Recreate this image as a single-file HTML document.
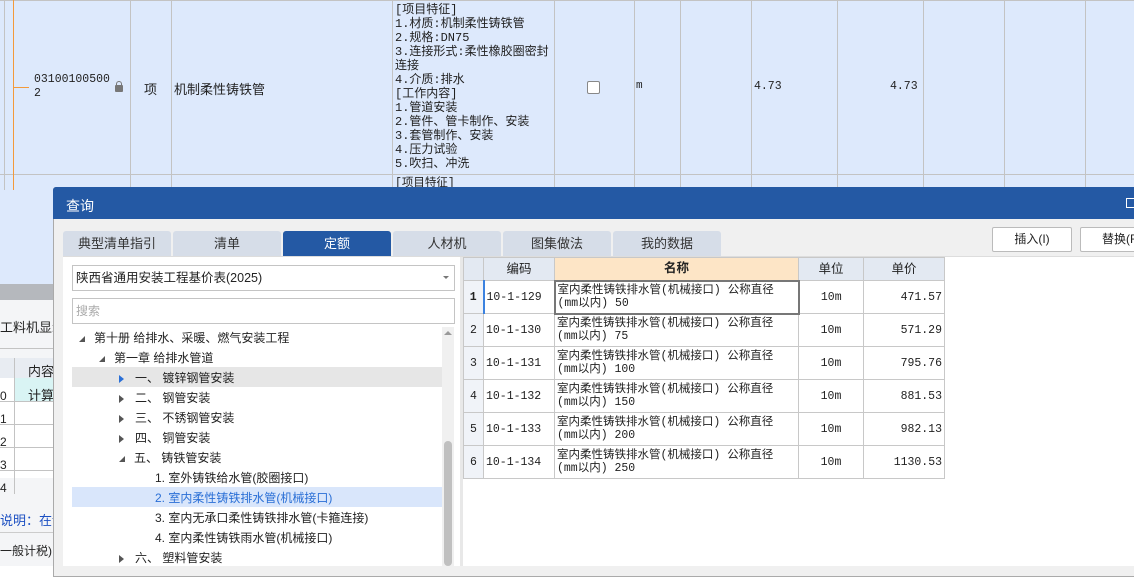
<!DOCTYPE html>
<html><head><meta charset="utf-8"><style>
*{margin:0;padding:0;box-sizing:border-box}
body{width:1134px;height:566px;overflow:hidden;position:relative;background:#fff;font-family:"Liberation Sans","Noto Sans CJK SC",sans-serif;font-size:12px;color:#222}
.a{position:absolute}
.vl{position:absolute;width:1px;background:#c3c3c3}
.hl{position:absolute;height:1px;background:#c3c3c3}
.mono{font-family:"Liberation Mono","Noto Sans CJK SC",monospace;font-size:11.5px;line-height:14px}
.tab{position:absolute;top:231px;height:25px;background:#d6dde8;border-radius:3px 3px 0 0;text-align:center;line-height:25px;font-size:13px;color:#333}
.tr{position:absolute;left:72px;width:370px;height:20px;line-height:20px;font-size:12px;color:#222}
.tri{display:inline-block;width:0;height:0;border-top:4px solid transparent;border-bottom:4px solid transparent;border-left:5px solid #555;vertical-align:middle}
.trd{display:inline-block;width:0;height:0;border-left:6px solid transparent;border-bottom:6px solid #555;vertical-align:middle}
td{border:1px solid #c8c8c8;font-family:"Liberation Mono","Noto Sans CJK SC",monospace;font-size:11.5px;padding:0 2px;height:33px;line-height:13px;white-space:nowrap}
tr.h td{height:23px;font-family:"Liberation Sans","Noto Sans CJK SC",sans-serif;font-size:12.5px;text-align:center}
</style></head><body>
<div class="a" style="left:0;top:0;width:1134px;height:190px;background:#dde9fc"></div>
<div class="hl" style="left:0;top:0;width:1134px"></div>
<div class="hl" style="left:0;top:174px;width:1134px"></div>
<div class="vl" style="left:4px;top:0;height:190px"></div>
<div class="vl" style="left:130px;top:0;height:190px"></div>
<div class="vl" style="left:171px;top:0;height:190px"></div>
<div class="vl" style="left:392px;top:0;height:190px"></div>
<div class="vl" style="left:554px;top:0;height:190px"></div>
<div class="vl" style="left:634px;top:0;height:190px"></div>
<div class="vl" style="left:680px;top:0;height:190px"></div>
<div class="vl" style="left:751px;top:0;height:190px"></div>
<div class="vl" style="left:837px;top:0;height:190px"></div>
<div class="vl" style="left:923px;top:0;height:190px"></div>
<div class="vl" style="left:1004px;top:0;height:190px"></div>
<div class="vl" style="left:1085px;top:0;height:190px"></div>
<div class="a" style="left:13px;top:0;width:1px;height:260px;background:#f39a3b"></div>
<div class="a" style="left:13px;top:87px;width:16px;height:1px;background:#f39a3b"></div>
<div class="a" style="left:13px;top:260px;width:16px;height:1px;background:#f39a3b"></div>
<div class="a mono" style="left:34px;top:73px">03100100500<br>2</div>
<div class="a" style="left:115px;top:85px;width:8px;height:7px;background:#777;border-radius:1px"></div>
<div class="a" style="left:116px;top:81px;width:6px;height:6px;border:1.5px solid #777;border-bottom:none;border-radius:3px 3px 0 0"></div>
<div class="a" style="left:144px;top:79px;font-size:13px">项</div>
<div class="a" style="left:174px;top:79px;font-size:13px">机制柔性铸铁管</div>
<div class="a mono" style="left:395px;top:3px;width:158px;font-size:12px">[项目特征]<br>1.材质:机制柔性铸铁管<br>2.规格:DN75<br>3.连接形式:柔性橡胶圈密封连接<br>4.介质:排水<br>[工作内容]<br>1.管道安装<br>2.管件、管卡制作、安装<br>3.套管制作、安装<br>4.压力试验<br>5.吹扫、冲洗</div>
<div class="a mono" style="left:395px;top:177px">[项目特征]</div>
<div class="a" style="left:587px;top:81px;width:13px;height:13px;border:1px solid #888;border-radius:2px;background:#fff"></div>
<div class="a" style="left:636px;top:80px;font-size:11px;font-family:'Liberation Mono',monospace">m</div>
<div class="a mono" style="left:754px;top:80px">4.73</div>
<div class="a mono" style="left:890px;top:80px">4.73</div>
<div class="a mono" style="left:34px;top:248px">031<br>3</div>
<div class="a" style="left:0;top:190px;width:53px;height:96px;background:#dde9fc"></div>
<div class="a" style="left:0;top:284px;width:53px;height:16px;background:#b5b8bd"></div>
<div class="a" style="left:0;top:300px;width:53px;height:266px;background:#f4f5f7"></div>
<div class="a" style="left:0;top:317px;font-size:13px">工料机显示</div>
<div class="hl" style="left:0;top:348px;width:53px"></div>
<div class="a" style="left:0;top:358px;width:53px;height:20px;background:#e8ecf2"></div>
<div class="a" style="left:28px;top:361px;font-size:13px">内容</div>
<div class="a" style="left:14px;top:378px;width:39px;height:24px;background:#d9f4f4"></div>
<div class="a" style="left:0;top:378px;width:14px;height:100px;background:#fff"></div>
<div class="a" style="left:14px;top:402px;width:39px;height:76px;background:#fff"></div>
<div class="a" style="left:28px;top:385px;font-size:13px">计算</div>
<div class="a" style="left:0;top:385px;font-size:12px;line-height:23px">0<br>1<br>2<br>3<br>4</div>
<div class="vl" style="left:14px;top:358px;height:136px"></div>
<div class="hl" style="left:0;top:401px;width:53px"></div><div class="hl" style="left:0;top:424px;width:53px"></div><div class="hl" style="left:0;top:447px;width:53px"></div><div class="hl" style="left:0;top:470px;width:53px"></div>
<div class="a" style="left:0;top:510px;font-size:13px;color:#1b4fc2">说明：在计</div>
<div class="a" style="left:0;top:532px;width:53px;height:1px;background:#ccc"></div>
<div class="a" style="left:0;top:542px;font-size:12px">一般计税)</div>
<div class="a" style="left:53px;top:187px;width:1090px;height:390px;background:#f0f0f0;border:1px solid #aaa;border-radius:3px 3px 0 0"></div>
<div class="a" style="left:53px;top:187px;width:1090px;height:32px;background:#2459a4;border-radius:3px 3px 0 0"></div>
<div class="a" style="left:66px;top:196px;color:#fff;font-size:14px">查询</div>
<div class="a" style="left:1126px;top:198px;width:10px;height:10px;border:1px solid #fff"></div>
<div class="tab" style="left:63px;width:108px">典型清单指引</div>
<div class="tab" style="left:173px;width:108px">清单</div>
<div class="tab" style="left:283px;width:108px;background:#2459a4;color:#fff">定额</div>
<div class="tab" style="left:393px;width:108px">人材机</div>
<div class="tab" style="left:503px;width:108px">图集做法</div>
<div class="tab" style="left:613px;width:108px">我的数据</div>
<div class="a" style="left:992px;top:227px;width:80px;height:25px;background:#fff;border:1px solid #bbb;border-radius:2px;text-align:center;line-height:23px;font-size:12px">插入(I)</div>
<div class="a" style="left:1080px;top:227px;width:80px;height:25px;background:#fff;border:1px solid #bbb;border-radius:2px;line-height:23px;font-size:12px;padding-left:21px">替换(R)</div>
<div class="a" style="left:63px;top:256px;width:1080px;height:1px;background:#ddd"></div>
<div class="a" style="left:63px;top:257px;width:397px;height:309px;background:#fff"></div>
<div class="a" style="left:72px;top:265px;width:383px;height:26px;border:1px solid #c4c4c4;line-height:24px;padding-left:3px;font-size:12.5px">陕西省通用安装工程基价表(2025)</div>
<div class="a" style="left:443px;top:276px;border-left:3px solid transparent;border-right:3px solid transparent;border-top:3px solid #777"></div>
<div class="a" style="left:72px;top:298px;width:383px;height:26px;border:1px solid #c4c4c4;line-height:24px;padding-left:3px;color:#aaa">搜索</div>
<div class="a" style="left:72px;top:367px;width:370px;height:20px;background:#e6e6e6"></div>
<div class="a" style="left:72px;top:487px;width:370px;height:20px;background:#d9e6fb"></div>
<div class="tr" style="top:328px"><span class="trd" style="margin-left:7px"></span><span style="margin-left:9px">第十册 给排水、采暖、燃气安装工程</span></div>
<div class="tr" style="top:348px"><span class="trd" style="margin-left:27px"></span><span style="margin-left:9px">第一章 给排水管道</span></div>
<div class="tr" style="top:368px"><span class="tri" style="margin-left:47px;border-left-color:#2a6fd6"></span><span style="margin-left:11px">一、 镀锌钢管安装</span></div>
<div class="tr" style="top:388px"><span class="tri" style="margin-left:47px"></span><span style="margin-left:11px">二、 钢管安装</span></div>
<div class="tr" style="top:408px"><span class="tri" style="margin-left:47px"></span><span style="margin-left:11px">三、 不锈钢管安装</span></div>
<div class="tr" style="top:428px"><span class="tri" style="margin-left:47px"></span><span style="margin-left:11px">四、 铜管安装</span></div>
<div class="tr" style="top:448px"><span class="trd" style="margin-left:47px"></span><span style="margin-left:9px">五、 铸铁管安装</span></div>
<div class="tr" style="top:468px;padding-left:83px">1. 室外铸铁给水管(胶圈接口)</div>
<div class="tr" style="top:488px;padding-left:83px;color:#2a6fd6">2. 室内柔性铸铁排水管(机械接口)</div>
<div class="tr" style="top:508px;padding-left:83px">3. 室内无承口柔性铸铁排水管(卡箍连接)</div>
<div class="tr" style="top:528px;padding-left:83px">4. 室内柔性铸铁雨水管(机械接口)</div>
<div class="tr" style="top:548px"><span class="tri" style="margin-left:47px"></span><span style="margin-left:11px">六、 塑料管安装</span></div>
<div class="a" style="left:442px;top:327px;width:12px;height:239px;background:#f0f0f0"></div>
<div class="a" style="left:444px;top:441px;width:8px;height:125px;background:#c0c0c0;border-radius:4px"></div>
<div class="a" style="left:444px;top:331px;border-left:4px solid transparent;border-right:4px solid transparent;border-bottom:4px solid #999"></div>
<div class="a" style="left:460px;top:257px;width:3px;height:309px;background:#e8e8e8"></div>
<div class="a" style="left:463px;top:257px;width:671px;height:309px;background:#fff"></div>
<table class="a" style="left:463px;top:257px;border-collapse:collapse;width:481px;table-layout:fixed">
<tr class="h" style="background:#e3e9f2"><td style="width:20px"></td><td style="width:71px">编码</td><td style="width:244px;background:#fde5c6;font-weight:bold">名称</td><td style="width:65px">单位</td><td style="width:81px">单价</td></tr>
<tr><td style="text-align:center;background:#f0f3f8;font-weight:bold">1</td><td style="border-left:2px solid #3b82e0">10-1-129</td><td style="border:2px solid #777">室内柔性铸铁排水管(机械接口) 公称直径<br>(mm以内) 50</td><td style="text-align:center">10m</td><td style="text-align:right">471.57</td></tr>
<tr><td style="text-align:center;background:#f0f3f8">2</td><td>10-1-130</td><td>室内柔性铸铁排水管(机械接口) 公称直径<br>(mm以内) 75</td><td style="text-align:center">10m</td><td style="text-align:right">571.29</td></tr>
<tr><td style="text-align:center;background:#f0f3f8">3</td><td>10-1-131</td><td>室内柔性铸铁排水管(机械接口) 公称直径<br>(mm以内) 100</td><td style="text-align:center">10m</td><td style="text-align:right">795.76</td></tr>
<tr><td style="text-align:center;background:#f0f3f8">4</td><td>10-1-132</td><td>室内柔性铸铁排水管(机械接口) 公称直径<br>(mm以内) 150</td><td style="text-align:center">10m</td><td style="text-align:right">881.53</td></tr>
<tr><td style="text-align:center;background:#f0f3f8">5</td><td>10-1-133</td><td>室内柔性铸铁排水管(机械接口) 公称直径<br>(mm以内) 200</td><td style="text-align:center">10m</td><td style="text-align:right">982.13</td></tr>
<tr><td style="text-align:center;background:#f0f3f8">6</td><td>10-1-134</td><td>室内柔性铸铁排水管(机械接口) 公称直径<br>(mm以内) 250</td><td style="text-align:center">10m</td><td style="text-align:right">1130.53</td></tr>
</table>
</body></html>
